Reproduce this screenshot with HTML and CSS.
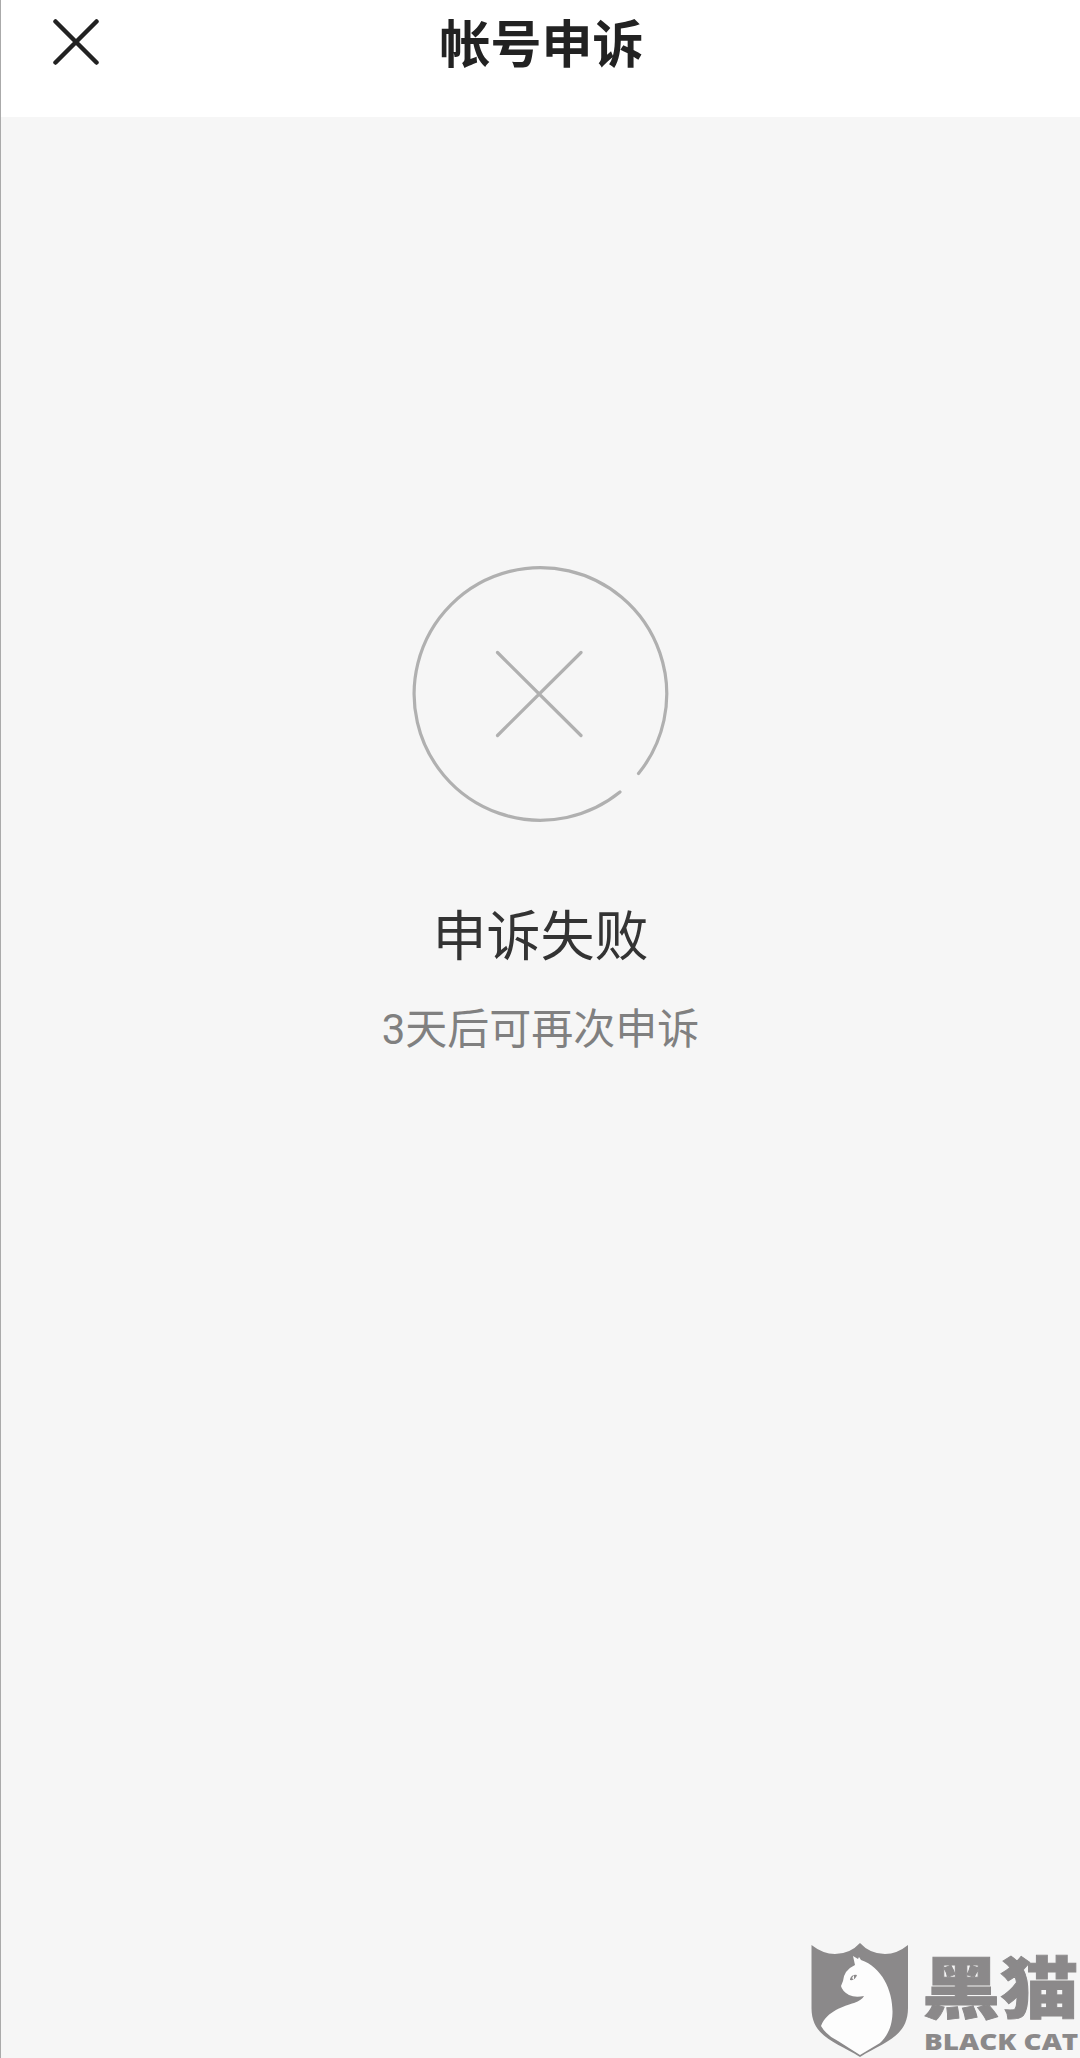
FILE: index.html
```html
<!DOCTYPE html>
<html lang="zh-CN">
<head>
    <meta charset="UTF-8">
    <meta name="viewport" content="width=device-width, initial-scale=1.0">
    <title>帐号申诉</title>
    <link rel="stylesheet" href="styles.css">
</head>
<body>
    <div class="page">
        <header class="header">
            <button class="close-btn" aria-label="关闭">
                <svg width="46" height="46" viewBox="0 0 46 46">
                    <path d="M2.5 2.5L43.5 43.5M43.5 2.5L2.5 43.5" />
                </svg>
            </button>
            <h1 class="title">帐号申诉</h1>
        </header>
        <main class="result">
            <svg class="result-icon" width="256" height="256" viewBox="0 0 256 256">
                <path d="M225.5 206.500A126.3 126.3 0 1 0 207 225" />
                <path d="M84.500 85.500L168 168.500M168 85.500L84.500 168.500" />
            </svg>
            <h2 class="result-title">申诉失败</h2>
            <p class="result-text">3天后可再次申诉</p>
        </main>
        <div class="watermark">
            <svg class="shield" width="98" height="115" viewBox="0 0 98 115">
                <path fill="#8b898a" d="M0.5 2Q12 11 24 11Q39 11 49 0Q59 11 74 11Q86 11 97 2V65C97 94 73 99 49 114C25 99 0.5 94 0.5 65Z" />
                <path fill="#fdfdfd" d="M42 13L47 16L48 14L50 17C71 24 82 48 81.5 70C81 87 74 95 69 100L49 112L27 98Q15 92 10 83C16 68 33 63 43 60Q51 57 53 53Q44 55 38 52Q31 48 30 43L32 38Q33 27 44 22Z" />
                <path fill="#8b898a" d="M39 36Q41 31 46 32Q44 38 39 37Z" />
                <path fill="#fdfdfd" d="M41 35L43 32L43 37Z" />
            </svg>
            <div class="brand">
                <span class="brand-cn">黑猫</span>
                <span class="brand-en">BLACK CAT</span>
            </div>
        </div>
    </div>
</body>
</html>
```
FILE: styles.css
```css
* {
    box-sizing: border-box;
}

body {
    margin: 0;
    background-color: #f6f6f6;
    font-family: "Noto Sans CJK SC", sans-serif;
}

.page {
    position: relative;
    display: flex;
    flex-direction: column;
    height: 2058px;
    border-left: 1px solid #aaaaaa;
    overflow: hidden;
}

.header {
    display: grid;
    grid-template-columns: 152px 1fr 150px;
    height: 117px;
    padding-bottom: 29px;
    align-items: center;
    background-color: #ffffff;
}

.close-btn {
    width: 46px;
    height: 46px;
    margin: -4px 0 0 52px;
    padding: 0;
    border: none;
    background: none;
}

.close-btn svg {
    display: block;
    fill: none;
    stroke: #222222;
    stroke-width: 4.5;
    stroke-linecap: round;
}

.title {
    margin: 0;
    padding-bottom: 6px;
    color: #222222;
    font-size: 51px;
    font-weight: bold;
    line-height: 82px;
    text-align: center;
}

.result {
    display: flex;
    flex-direction: column;
    align-items: center;
    padding-top: 450px;
}

.result-icon {
    fill: none;
    stroke: #b0b0b0;
    stroke-width: 3.2;
    stroke-linecap: round;
    overflow: visible;
}

.result-title {
    margin: 70px 0 0;
    color: #333333;
    font-size: 54px;
    font-weight: normal;
    line-height: 80px;
}

.result-text {
    margin: 26px 0 0;
    color: #808080;
    font-family: Roboto, "Noto Sans CJK SC", sans-serif;
    font-size: 42px;
    line-height: 62px;
}

/* Brand mark over the bottom right corner */
.watermark {
    position: absolute;
    right: 0;
    bottom: 0;
    display: flex;
    width: 269px;
    height: 115px;
    gap: 16px;
    color: #8b898a;
}

.shield {
    flex: none;
}

.brand {
    display: flex;
    flex-direction: column;
    align-items: flex-start;
    white-space: nowrap;
}

.brand-cn {
    height: 85px;
    font-size: 76px;
    font-weight: 900;
    line-height: 85px;
    -webkit-text-stroke: 1px #8b898a;
    transform: translate(-3px, -1px) scale(1.03, 0.88);
    transform-origin: left center;
}

.brand-en {
    font-family: "Open Sans", sans-serif;
    font-size: 23px;
    font-weight: 800;
    line-height: 26px;
    transform: translateX(-1px) scaleX(1.21);
    transform-origin: left center;
}
```
